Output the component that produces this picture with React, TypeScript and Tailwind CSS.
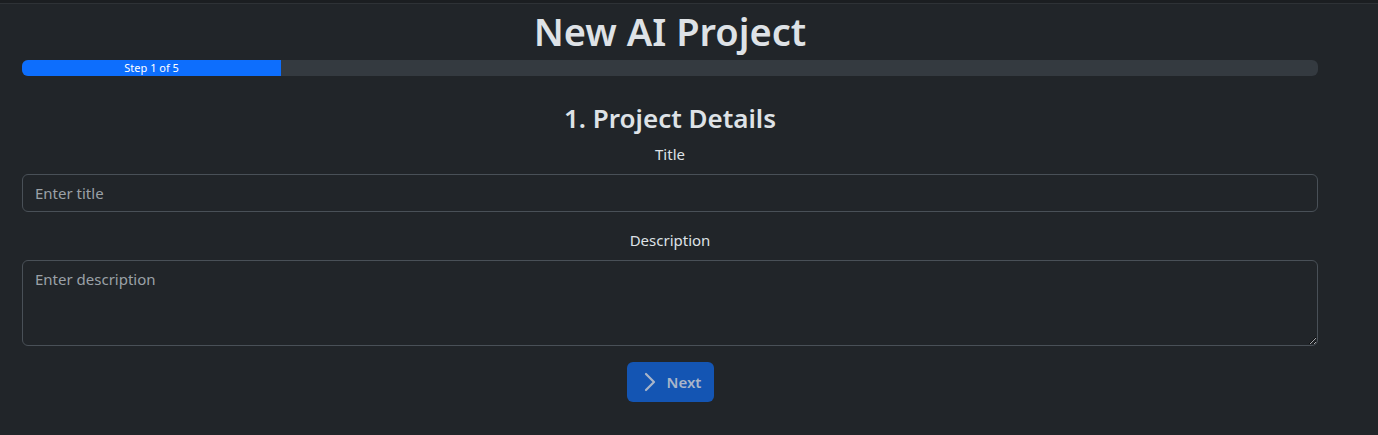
import { useState } from 'react';

export default function App() {
  const [title, setTitle] = useState('');
  const [description, setDescription] = useState('');
  const step = 1;
  const total = 5;

  return (
    <div className="min-h-[435px] bg-[#212529] text-[#dee2e6] font-['Noto_Sans',sans-serif]">
      {/* top strip */}
      <div className="h-[3px] bg-[#1b1e21]" />
      <div className="h-px bg-[#2e3236]" />

      <div className="w-[1296px] ml-[22px]">
        <h1 className="text-center text-[38px] font-semibold leading-[48px] mt-[3px] mb-[5px] text-[#dee2e6]">
          New AI Project
        </h1>

        {/* progress */}
        <div className="flex h-4 w-full overflow-hidden rounded-md bg-[#343a40]">
          <div
            className="flex items-center justify-center bg-[#0d6efd] text-[11px] text-white"
            style={{ width: `${(step / total) * 100}%` }}
          >
            Step {step} of {total}
          </div>
        </div>

        <h3 className="mt-[25px] mb-[7px] text-center text-[26px] font-semibold leading-[34px] text-[#dee2e6]">
          1. Project Details
        </h3>

        <div className="mb-4">
          <label className="mb-2 block text-center text-[15px] leading-6">Title</label>
          <input
            value={title}
            onChange={(e) => setTitle(e.target.value)}
            placeholder="Enter title"
            className="block h-[38px] w-full rounded-md border border-[#495057] bg-[#212529] px-3 text-[15px] text-[#dee2e6] placeholder:text-[#9ba1a7] outline-none"
          />
        </div>

        <div className="mb-4">
          <label className="mb-2 block text-center text-[15px] leading-6">Description</label>
          <textarea
            value={description}
            onChange={(e) => setDescription(e.target.value)}
            placeholder="Enter description"
            className="block h-[86px] w-full rounded-md border border-[#495057] bg-[#212529] px-3 py-[7px] text-[15px] text-[#dee2e6] placeholder:text-[#9ba1a7] outline-none"
          />
        </div>

        <div className="flex justify-center">
          <button
            disabled
            className="flex h-10 w-[87px] items-center justify-center gap-[10px] rounded-md bg-[#1455b3] pl-[4px] text-[15px] font-semibold text-[#a9b5c9]"
          >
            <svg width="14" height="20" viewBox="0 0 14 20" fill="none" stroke="currentColor" strokeWidth="2.2" strokeLinecap="round" strokeLinejoin="round">
              <path d="M3 2l8 8-8 8" />
            </svg>
            Next
          </button>
        </div>
      </div>
    </div>
  );
}
